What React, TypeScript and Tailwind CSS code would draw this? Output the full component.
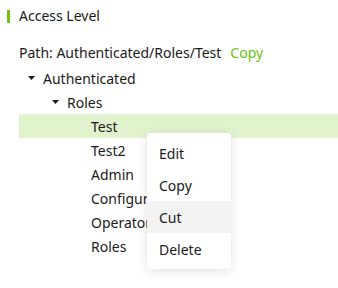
import { useState } from 'react';

interface Node {
  label: string;
  level: number;
  open?: boolean;
  selected?: boolean;
}

const rows: Node[] = [
  { label: 'Authenticated', level: 0, open: true },
  { label: 'Roles', level: 1, open: true },
  { label: 'Test', level: 2, selected: true },
  { label: 'Test2', level: 2 },
  { label: 'Admin', level: 2 },
  { label: 'Configurator', level: 2 },
  { label: 'Operator', level: 2 },
  { label: 'Roles', level: 2 },
];

const menuItems = ['Edit', 'Copy', 'Cut', 'Delete'];

function Caret() {
  return (
    <svg width="7" height="4" viewBox="0 0 7 4" className="text-[#1a1a1a]">
      <path d="M0 0 H7 L3.5 4 Z" fill="currentColor" />
    </svg>
  );
}

export default function App() {
  const [hovered, setHovered] = useState('Cut');

  return (
    <div
      className="relative w-[338px] h-[288px] bg-white text-[14px] text-[#1a1a1a] overflow-hidden"
      style={{ fontFamily: '"Noto Sans", "Open Sans", sans-serif' }}
    >
      {/* header */}
      <div className="flex items-center pl-[7px] pt-[9px]">
        <div className="w-[3px] h-[13px] bg-[#6cc40c]" />
        <span className="ml-[9px] leading-[14px]">Access Level</span>
      </div>

      {/* path */}
      <div className="flex items-center h-6 mt-[17px] pl-[19px]">
        <span>Path: Authenticated/Roles/Test</span>
        <span className="ml-[9px] text-[#6cc40c]">Copy</span>
      </div>

      {/* tree */}
      <div className="mt-[2px] ml-[19px]">
        {rows.map((r, i) => (
          <div
            key={i}
            className={`flex items-center h-6 ${r.selected ? 'bg-[#e1f3cc]' : ''}`}
            style={{ paddingLeft: r.level * 24 }}
          >
            <div className="w-6 flex justify-center">{r.open && <Caret />}</div>
            <span className="whitespace-nowrap">{r.label}</span>
          </div>
        ))}
      </div>

      {/* context menu */}
      <div className="absolute left-[147px] top-[133px] w-[84px] py-1 bg-white rounded-[3px] shadow-[0_2px_12px_rgba(0,0,0,0.12)]">
        {menuItems.map((m) => (
          <div
            key={m}
            onMouseEnter={() => setHovered(m)}
            className={`flex items-center h-8 px-3 ${hovered === m ? 'bg-[#f3f3f3]' : ''}`}
          >
            {m}
          </div>
        ))}
      </div>
    </div>
  );
}
